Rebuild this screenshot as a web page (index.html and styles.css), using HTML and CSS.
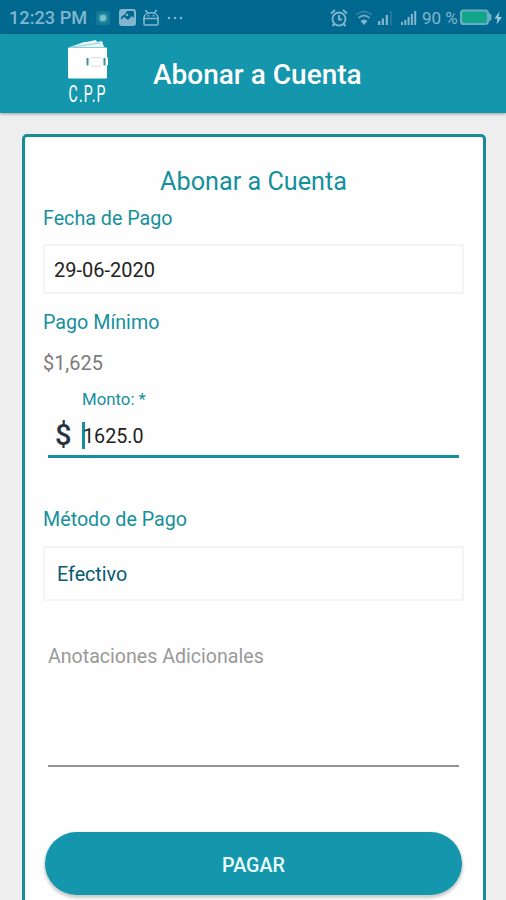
FILE: index.html
```html
<!DOCTYPE html>
<html lang="es">
<head>
    <meta charset="UTF-8">
    <meta name="viewport" content="width=device-width, initial-scale=1.0">
    <title>Abonar a Cuenta</title>
    <link rel="stylesheet" href="styles.css">
</head>
<body>
    <div class="status-bar">
        <span class="clock">12:23 PM</span>
        <svg class="icon-app" width="16" height="16" viewBox="0 0 16 16">
            <rect x="1" y="1" width="14" height="14" rx="2" fill="#117c95"/>
            <circle cx="8" cy="8" r="5" fill="#2b8fa4"/>
            <rect x="5" y="5" width="6" height="6" rx="2" fill="#79bfca"/>
        </svg>
        <svg class="icon-image" width="17" height="17" viewBox="0 0 17 17">
            <rect x="1" y="1" width="15" height="15" rx="2" fill="#01688f" stroke="#82b6cf" stroke-width="2"/>
            <path d="M1 12l4-4 4 3 4-4 3 3v6H1z" fill="#82b6cf"/>
            <path d="M2 2h6L6 5 2 8z" fill="#82b6cf"/>
            <circle cx="8" cy="6" r="1.300" fill="#82b6cf"/>
        </svg>
        <svg class="icon-android" width="18" height="17" viewBox="0 0 18 17">
            <path d="M2 9C2 2 16 2 16 9M1 9.500h16M2 9v6q0 1 1 1h12q1 0 1-1V9M3.500 1l2 3M14.500 1l-2 3" fill="none" stroke="#82b6cf" stroke-width="1.600"/>
            <circle cx="6.500" cy="6.800" r="1" fill="#82b6cf"/>
            <circle cx="11.500" cy="6.800" r="1" fill="#82b6cf"/>
        </svg>
        <svg class="icon-more" width="16" height="4" viewBox="0 0 16 4">
            <g fill="#82b6cf"><circle cx="2" cy="2" r="1.300"/><circle cx="8" cy="2" r="1.300"/><circle cx="14" cy="2" r="1.300"/></g>
        </svg>
        <svg class="icon-alarm" width="18" height="18" viewBox="0 0 18 18">
            <g fill="none" stroke="#82b6cf" stroke-width="1.900">
                <circle cx="9" cy="10" r="6.500"/>
                <path d="M1 4.500L5 1M17 4.500L13 1M9 6v4.500h3M4.500 15l-2 2M13.500 15l2 2"/>
            </g>
        </svg>
        <svg class="icon-wifi" width="18" height="16" viewBox="0 0 18 16">
            <path d="M1 5q8-7 16 0" fill="none" stroke="#3f88ac" stroke-width="1.500"/>
            <path d="M3.500 8q5.500-5 11 0" fill="none" stroke="#6ba8c4" stroke-width="1.700"/>
            <path d="M5.500 11q3.500-3 7 0L9 15z" fill="#82b6cf"/>
        </svg>
        <svg class="icon-signal" width="15" height="16" viewBox="0 0 15 16">
            <path d="M0 11h2.300v4H0zM3.700 8.500H6V15H3.700zM7.700 5H10v10H7.700z" fill="#82b6cf"/>
            <path d="M12 1h1.700v14H12z" fill="#2b7ba2"/>
        </svg>
        <svg class="icon-signal-full" width="16" height="16" viewBox="0 0 16 16">
            <path d="M0 12h2v3H0zM3.300 10h2v5h-2zM6.600 7h2v8h-2zM9.900 4h2v11h-2zM13.200 1h2v14h-2z" fill="#82b6cf"/>
        </svg>
        <span class="battery-text">90 %</span>
        <svg class="icon-battery" width="43" height="17" viewBox="0 0 43 17">
            <rect x="1" y="1.500" width="27" height="13.500" rx="3" fill="#11a58a" stroke="#6aaec5" stroke-width="2.200"/>
            <path d="M29 4.500q2.500 0 2.500 2v3.500q0 2-2.500 2z" fill="#6aaec5"/>
            <path d="M39.500 2.500L34.500 9.500h3l-1 6 5.500-7.500h-3.500z" fill="#9acbdc"/>
        </svg>
    </div>

    <div class="header">
        <svg class="logo" width="44" height="70" viewBox="0 0 44 70">
            <path d="M3 8L17 3l2 0 10-2 1 2 5-1 2 6z" fill="#e6f7f9"/>
            <path d="M4 8l29-4" stroke="#9bd2da" stroke-width="1"/>
            <rect x="1" y="8.500" width="39" height="31" rx="1" fill="#fff"/>
            <rect x="36" y="18" width="5" height="9" rx="2" fill="#fff"/>
            <path d="M24 18.500h10M24 27h10" stroke="#d3e0e2"/>
            <path d="M20.500 19v7.500M37.500 19v7.500" stroke="#438f9b" stroke-width="2"/>
            <text class="logo-text" transform="translate(1.500 63) scale(.59 1)">C.P.P</text>
        </svg>
        <h1>Abonar a Cuenta</h1>
    </div>

    <div class="card">
        <h2>Abonar a Cuenta</h2>
        <div class="label">Fecha de Pago</div>
        <div class="field date">29-06-2020</div>
        <div class="label">Pago Mínimo</div>
        <div class="minimum">$1,625</div>
        <div class="amount">
            <div class="amount-label">Monto: *</div>
            <div class="amount-row">
                <span class="currency">$</span>
                <span class="cursor"></span>
                <span class="value">1625.0</span>
            </div>
        </div>
        <div class="label">Método de Pago</div>
        <div class="field method">Efectivo</div>
        <div class="notes">Anotaciones Adicionales</div>
        <button class="pay" type="button">PAGAR</button>
    </div>
</body>
</html>
```
FILE: styles.css
```css
* {
    box-sizing: border-box;
}
body {
    margin: 0;
    height: 900px;
    overflow: hidden;
    background-color: #eeeeee;
    font-family: Roboto, sans-serif;
}
.status-bar {
    display: flex;
    align-items: center;
    height: 34px;
    padding: 1px 3px 0 9px;
    background-color: #01688f;
    color: #82b6cf;
}
.status-bar svg {
    flex: none;
}
.clock {
    width: 79px;
    font-size: 18.200px;
    font-weight: 500;
    white-space: nowrap;
}
.icon-app {
    margin-left: 7px;
}
.icon-image {
    margin-left: 8px;
}
.icon-android {
    margin-left: 6px;
}
.icon-more {
    margin-left: 7px;
}
.icon-alarm {
    margin-left: auto;
}
.icon-wifi {
    margin-left: 7px;
}
.icon-signal {
    margin-left: 5px;
}
.icon-signal-full {
    margin-left: 8px;
}
.battery-text {
    width: 38px;
    margin-left: 5px;
    font-size: 17px;
    white-space: nowrap;
}
.header {
    display: flex;
    align-items: flex-start;
    height: 79px;
    padding: 5px 0 0 67px;
    background-color: #1496ad;
    box-shadow: 0 1px 3px rgba(0, 0, 0, 0.35);
}
.logo-text {
    fill: #fff;
    font-size: 24px;
    font-weight: 400;
    letter-spacing: 2px;
}
.header h1 {
    margin: 19px 0 0 42px;
    font-size: 28px;
    line-height: 34px;
    font-weight: 500;
    color: #fff;
}
.card {
    height: 800px;
    margin: 21px 20px 0 22px;
    padding: 27px 19px 0 18px;
    border: 3px solid #158c96;
    border-radius: 5px;
    background-color: #fefefe;
}
.card h2 {
    margin: 0;
    font-size: 25.200px;
    line-height: 35px;
    font-weight: 400;
    text-align: center;
    color: #16909c;
}
.label {
    height: 24px;
    font-size: 19.700px;
    line-height: 26px;
    color: #16909c;
}
.card h2 + .label {
    margin-top: 7px;
}
.field {
    display: flex;
    align-items: center;
    border: 2px solid #f4f4f4;
    font-size: 20px;
}
.date {
    height: 50px;
    margin: 14px 0 16px;
    padding: 2px 0 0 9px;
    color: #222;
}
.minimum {
    height: 24px;
    margin-top: 17px;
    font-size: 19.900px;
    line-height: 26px;
    color: #7b7b7b;
}
.amount {
    height: 69px;
    margin: 14px 5px 49px;
    border-bottom: 3px solid #168e9e;
}
.amount-label {
    height: 19px;
    padding-left: 34px;
    font-size: 16.800px;
    line-height: 21px;
    color: #16909c;
}
.amount-row {
    display: flex;
    align-items: center;
    height: 34px;
    margin-top: 10px;
    font-size: 20px;
    color: #222;
}
.currency {
    width: 34px;
    padding-left: 7px;
    font-size: 29px;
    font-weight: 500;
    color: #263640;
}
.cursor {
    width: 3px;
    height: 27px;
    background-color: #168e9e;
}
.value {
    margin: 2px 0 0 -2px;
    font-size: 19.700px;
}
.method {
    height: 55px;
    margin-top: 15px;
    padding: 2px 0 0 12px;
    font-size: 19.700px;
    color: #075c72;
}
.notes {
    height: 123px;
    margin: 43px 5px 0;
    border-bottom: 2px solid #929292;
    font-size: 19.600px;
    line-height: 26px;
    color: #999;
}
.pay {
    display: block;
    width: 417px;
    height: 63px;
    margin: 65px 0 0 2px;
    padding: 3px 0 0;
    border: 0;
    border-radius: 32px;
    background-color: #1496ad;
    box-shadow: 0 2px 3px 1px rgba(0, 0, 0, 0.2);
    font-family: inherit;
    font-size: 19.700px;
    font-weight: 500;
    color: #e9fbfd;
}
```
